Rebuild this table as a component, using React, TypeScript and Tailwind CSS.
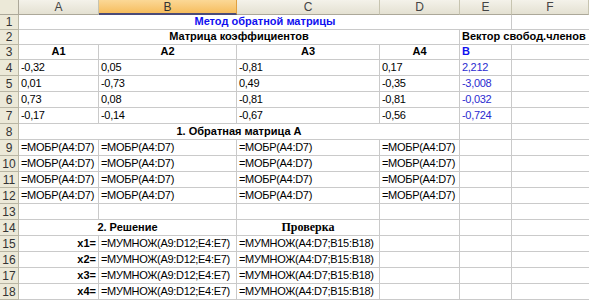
import clsx from 'clsx';

type CellProps = {
  children?: React.ReactNode;
  className?: string;
};

// plain worksheet cell, text sits near the bottom like in Excel
const Cell = ({ children, className }: CellProps) => (
  <div
    className={clsx(
      'flex items-end whitespace-nowrap overflow-visible border-r border-b border-[#cacaca] px-[2px] pb-[2px] text-[11px] leading-none',
      className
    )}
  >
    {children}
  </div>
);

const LastCell = ({ children, className }: CellProps) => (
  <div className={clsx('flex items-end whitespace-nowrap border-b border-[#cacaca] px-[2px] pb-[2px] text-[11px] leading-none', className)}>
    {children}
  </div>
);

const RowHead = ({ n }: { n: number }) => (
  <div className="flex items-center justify-center border-r border-b border-[#b9b6a4] bg-[#ece9d8] text-[12px] leading-none text-[#333]">
    {n}
  </div>
);

const ColHead = ({ label, selected }: { label: string; selected?: boolean }) => (
  <div
    className={clsx(
      'flex items-center justify-center border-r text-[12px] leading-none',
      selected
        ? 'border-[#e0a040] border-b-2 border-b-[#4b4b78] bg-gradient-to-b from-[#fbd896] to-[#f6bd5c] text-[#333]'
        : 'border-[#c7c4b0] border-b border-b-[#aca899] bg-gradient-to-b from-[#f4f2ea] to-[#e4e1d2] text-[#444]'
    )}
  >
    {label}
  </div>
);

const coeffs = [
  ['-0,32', '0,05', '-0,81', '0,17', '2,212'],
  ['0,01', '-0,73', '0,49', '-0,35', '-3,008'],
  ['0,73', '0,08', '-0,81', '-0,81', '-0,032'],
  ['-0,17', '-0,14', '-0,67', '-0,56', '-0,724'],
];

const bold = 'font-bold';
const plain = 'tracking-[-0.3px]';

export default function App() {
  return (
    <div
      className="grid h-[300px] w-[589px] overflow-hidden bg-white text-black grid-cols-[19px_80px_138px_143px_80px_52px_77px] grid-rows-[15px_15px_15px_15px_repeat(15,16px)]"
      style={{ fontFamily: '"Liberation Sans", Arial, sans-serif' }}
    >
      {/* column headers */}
      <div className="border-r border-b border-[#aca899] bg-[#ece9d8]" />
      <ColHead label="A" />
      <ColHead label="B" selected />
      <ColHead label="C" />
      <ColHead label="D" />
      <ColHead label="E" />
      <ColHead label="F" />

      {/* row 1 */}
      <RowHead n={1} />
      <Cell className={clsx('col-span-5 justify-center text-[#1010f0]', bold)}>Метод обратной матрицы</Cell>
      <LastCell />

      {/* row 2 */}
      <RowHead n={2} />
      <Cell className={clsx('col-span-4 justify-center', bold)}>Матрица коэффициентов</Cell>
      <LastCell className={clsx('col-span-2', bold)}>Вектор свобод.членов</LastCell>

      {/* row 3 */}
      <RowHead n={3} />
      <Cell className={clsx('justify-center', bold)}>A1</Cell>
      <Cell className={clsx('justify-center', bold)}>A2</Cell>
      <Cell className={clsx('justify-center', bold)}>A3</Cell>
      <Cell className={clsx('justify-center', bold)}>A4</Cell>
      <Cell className={clsx('text-[#1010f0]', bold)}>B</Cell>
      <LastCell />

      {/* rows 4-7 */}
      {coeffs.map((r, i) => (
        <div key={i} className="contents">
          <RowHead n={i + 4} />
          <Cell className={plain}>{r[0]}</Cell>
          <Cell className={plain}>{r[1]}</Cell>
          <Cell className={plain}>{r[2]}</Cell>
          <Cell className={plain}>{r[3]}</Cell>
          <Cell className={clsx('text-[#2b2bd0]', plain)}>{r[4]}</Cell>
          <LastCell />
        </div>
      ))}

      {/* row 8 */}
      <RowHead n={8} />
      <Cell className={clsx('col-span-4 justify-center', bold)}>1. Обратная матрица А</Cell>
      <Cell />
      <LastCell />

      {/* rows 9-12 */}
      {[9, 10, 11, 12].map((n) => (
        <div key={n} className="contents">
          <RowHead n={n} />
          <Cell className={plain}>=МОБР(A4:D7)</Cell>
          <Cell className={plain}>=МОБР(A4:D7)</Cell>
          <Cell className={plain}>=МОБР(A4:D7)</Cell>
          <Cell className={plain}>=МОБР(A4:D7)</Cell>
          <Cell />
          <LastCell />
        </div>
      ))}

      {/* row 13 */}
      <RowHead n={13} />
      <Cell />
      <Cell />
      <Cell />
      <Cell />
      <Cell />
      <LastCell />

      {/* row 14 */}
      <RowHead n={14} />
      <Cell className={clsx('col-span-2 justify-center', bold)}>2. Решение</Cell>
      <Cell className="justify-center font-bold">
        <span style={{ fontFamily: '"Liberation Serif", "Times New Roman", serif' }} className="text-[12px]">
          Проверка
        </span>
      </Cell>
      <Cell />
      <Cell />
      <LastCell />

      {/* rows 15-18 */}
      {[1, 2, 3, 4].map((k) => (
        <div key={k} className="contents">
          <RowHead n={k + 14} />
          <Cell className={clsx('justify-end', bold)}>x{k}=</Cell>
          <Cell className={plain}>=МУМНОЖ(A9:D12;E4:E7)</Cell>
          <Cell className={plain}>=МУМНОЖ(A4:D7;B15:B18)</Cell>
          <Cell />
          <Cell />
          <LastCell />
        </div>
      ))}
    </div>
  );
}
